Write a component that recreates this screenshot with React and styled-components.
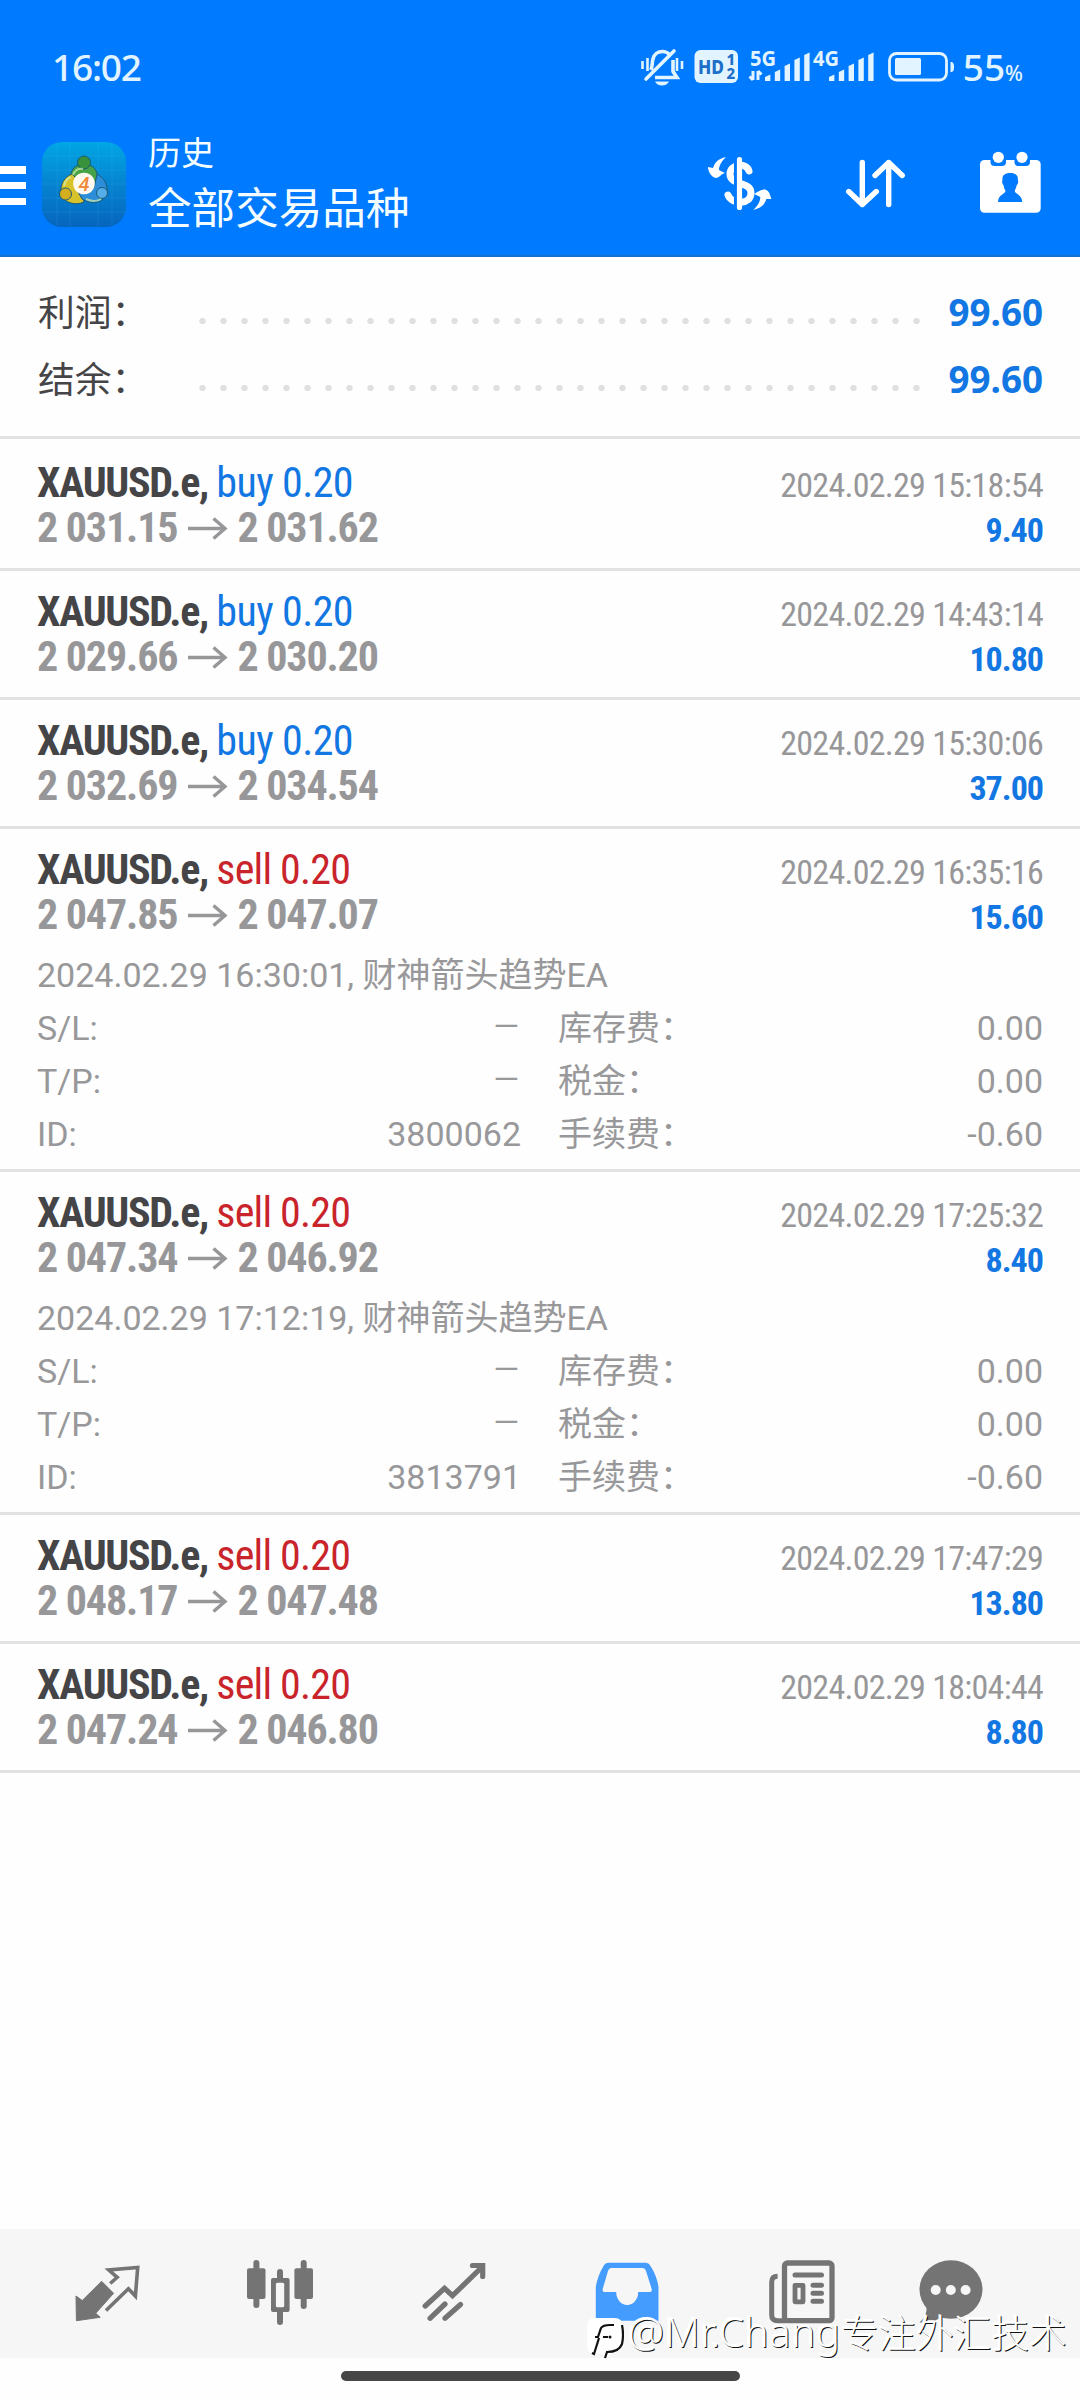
import * as React from "react"
import styled, { createGlobalStyle } from "styled-components"

const GlobalStyle = createGlobalStyle`
* {
  box-sizing: border-box;
}

body {
  margin: 0;
  background: #fefefe;
  font-family: Roboto, "Noto Sans CJK SC", sans-serif;
}

svg {
  display: block;
  flex: none;
}
`

// Styled Components
const Screen = styled.main`
width: 1080px;
height: 2400px;
display: flex;
flex-direction: column;
overflow: hidden;
white-space: nowrap;
`

const Header = styled.header`
height: 257px;
background: #007aff;
border-bottom: 2px solid #1670cf;
color: #f4fdff;
`

const StatusBar = styled.div`
height: 134px;
padding: 0 57px 0 52px;
display: flex;
justify-content: space-between;
color: #e2f4ff;
`

const Clock = styled.span`
font: 500 37px/134px "Noto Sans", sans-serif;
letter-spacing: -1.2px;
`

const AppBar = styled.div`
height: 121px;
display: flex;
`

const MenuIcon = styled.div`
width: 26px;
height: 39px;
margin: 32px 16px 0 0;
display: flex;
flex-direction: column;
justify-content: space-between;

span {
  height: 7.5px;
  background: white;
}
`

const Titles = styled.div`
flex: 1;
padding-left: 21px;

h1,h2 {
  margin: 0;
  font-weight: 400;
  font-family: "Noto Sans CJK SC", sans-serif;
}

h2 {
  font-size: 33px;
  line-height: 34px;
}

h1 {
  font-size: 43.6px;
  line-height: 74px;
}
`

const Actions = styled.div`
display: flex;
gap: 66px;
padding: 14px 34px 0 0;
`

const Summary = styled.section`
height: 182px;
padding-top: 21px;
border-bottom: 3px solid #e2e2e2;
margin-bottom: 3px;
`

const SummaryRow = styled.div`
height: 67px;
padding: 0 37px 0 38px;
display: flex;
align-items: center;
`

const SummaryLabel = styled.span`
width: 154px;
margin-top: -2px;
font: 400 36.8px/67px "Noto Sans CJK SC", sans-serif;
color: #454547;
`

const Dots = styled.span`
width: 735px;
height: 6px;
margin-top: 18px;
background: radial-gradient(circle, #e0e0e0 2.9px, transparent 3.5px) 0 0 / 21px 6px;
`

const SummaryValue = styled.span`
flex: 1;
text-align: right;
font: 700 36.8px/68px "Noto Sans", sans-serif;
color: #1277e2;
`

const Deal = styled.article`
height: ${p => (p.$open ? 343 : 129)}px;
padding: 18px 37px 0;
border-bottom: 3px solid #e2e2e2;
`

const Line = styled.div`
height: 45px;
display: flex;
justify-content: space-between;
align-items: baseline;
line-height: 45px;
font-family: "Roboto Condensed", Roboto, sans-serif;
font-stretch: 75%;
`

const Symbol = styled.span`
font-size: 42px;
font-weight: 700;
letter-spacing: -1.3px;
color: #454547;
`

const Side = styled.span`
font-weight: 400;
letter-spacing: ${p => (p.$side === "buy" ? -0.6 : -0.8)}px;
color: ${p => (p.$side === "buy" ? "#1277e2" : "#c9242b")};
`

const Prices = styled.span`
display: flex;
font-size: 42px;
font-weight: 700;
letter-spacing: -1.1px;
color: #97979a;

svg {
  margin: 12px 9px 0 11px;
}
`

const Time = styled.span`
font-size: 34px;
letter-spacing: -0.73px;
color: #97979a;
`

const Profit = styled.span`
font-size: 34px;
font-weight: 700;
letter-spacing: -1px;
color: #1277e2;
`

const Details = styled.div`
padding-top: 12px;
font-size: 34px;
line-height: 53px;
color: #98989a;
`

const Grid = styled.div`
display: grid;
grid-template-columns: 110px 374px 150px 1fr;
grid-auto-rows: 53px;

span:nth-child(even) {
  text-align: right;
}
span:nth-child(4n + 3) {
  padding-left: 37px;
}
`

const Dash = styled.i`
font-style: normal;
font-weight: 300;
font-size: 44px;
line-height: 0;
vertical-align: -2px;
`

const Spacer = styled.div`
flex: 1;
`

const TabBar = styled.nav`
height: 129px;
padding: 27px 0 0 20px;
background: #f6f6f6;
display: flex;
color: #747474;
`

const Tab = styled.div`
width: ${p => p.$width || 173.5}px;
display: flex;
justify-content: center;
color: ${p => (p.$active ? "#459cff" : "inherit")};
`

const HomeArea = styled.div`
height: 42px;
padding-top: 13px;
`

const HomeBar = styled.div`
width: 399px;
height: 10px;
margin: 0 auto;
border-radius: 5px;
background: #464646;
`

// sits over the tab bar
const Watermark = styled.div`
position: absolute;
left: 586px;
top: 2308px;
display: flex;
gap: 4px;
font: 300 40.5px/52px "Noto Sans", sans-serif;
letter-spacing: 0.5px;
color: white;
text-shadow: 1px 1px 0 #111, -1px -1px 0 white;

svg {
  margin-top: 9px;
}

> span {
  margin-top: -3px;
}

span span {
  font: 300 37.7px/52px "Noto Sans CJK SC", sans-serif;
  letter-spacing: 0;
}
`

const Signal = ({ label, data }) => (
  <svg width={data ? 64 : 62} height="134" viewBox={data ? "0 0 64 134" : "0 0 62 134"} fill="currentColor">
    <text x={data ? 2 : 1} y="65.500" fontFamily="Noto Sans" fontWeight="700" fontSize="21" textLength="26" lengthAdjust="spacingAndGlyphs">{label}</text>
    {data && <path d="M5 71v9M5 80l-3.500-3.500M10 80v-9M10 71l3.500 3.500" stroke="currentColor" strokeWidth="3" fill="none" />}
    {[0, 1, 2, 3, 4].map(i => (
      <path key={i} d={`M${17 + i * 9.8} ${81}v-${[4, 9, 15, 21, 26][i]}l5.4-2.4v${[6.4, 11.4, 17.4, 23.4, 28.4][i]}z`} />
    ))}
  </svg>
)

const StatusIcons = styled.div`
display: flex;
`

const Percent = styled.span`
font: 500 37px/134px "Noto Sans", sans-serif;
margin-left: 8px;

small {
  font-size: 21px;
}
`

const Status = () => (
  <StatusIcons>
    <svg width="53" height="134" viewBox="0 0 53 134" fill="none" stroke="currentColor" strokeWidth="3.6">
      <path d="M14 77.500h22l-4-6V60M10 70c1.500-4 1-8 2-11 1-5 5-7.500 9.500-7.500 3 0 5 1 7 3" />
      <path d="M5 79L33 51" strokeLinecap="round" />
      <path d="M14 81.500h14q-2 4-7 4t-7-4z" fill="currentColor" stroke="none" />
      <path d="M1.500 61v8M6.500 58v13M36 58v13M41 61v8" strokeWidth="2.600" />
    </svg>
    <svg width="54" height="134" viewBox="0 0 54 134">
      <rect x="0.500" y="50" width="43.500" height="33" rx="6" fill="currentColor" />
      <g fill="#1d6fc9" fontFamily="Noto Sans" fontWeight="800">
        <text x="4" y="74" fontSize="20" textLength="26" lengthAdjust="spacingAndGlyphs">HD</text>
        <text x="32.500" y="65" fontSize="15">1</text>
        <text x="32.500" y="79" fontSize="15">2</text>
      </g>
    </svg>
    <Signal label="5G" data />
    <Signal label="4G" />
    <svg width="81" height="134" viewBox="0 0 81 134">
      <rect x="15.500" y="53.500" width="57" height="26.500" rx="7" fill="none" stroke="currentColor" strokeWidth="2.800" />
      <rect x="21" y="58" width="26" height="17" rx="1.500" fill="currentColor" />
      <path d="M76.500 62c3 0 3.500 2 3.500 5s-.5 5-3.500 5z" fill="currentColor" />
    </svg>
    <Percent>55<small>%</small></Percent>
  </StatusIcons>
)

const AppIcon = styled.svg`
margin-top: 8px;
`

const Logo = () => (
  <AppIcon width="85" height="85" viewBox="0 0 85 85">
    <defs>
      <linearGradient id="sky" x2="0" y2="1">
        <stop offset="0" stopColor="#00a6e4" />
        <stop offset=".5" stopColor="#0683d0" />
        <stop offset="1" stopColor="#0565bd" />
      </linearGradient>
    </defs>
    <rect width="84" height="85" rx="20" fill="url(#sky)" />
    <path d="M15 2v81M28 1v83M56 1v83M70 2v81M1 14h83M1 28h83M1 56h83M1 70h83M0 42h84" stroke="#4bb8ee" strokeOpacity=".16" />
    <g stroke="#195b76" strokeWidth="1">
      <path d="M28 42c-1-11 3-20 14-20s15 9 14 20l-7 3H34z" fill="#48a348" />
      <path d="M30 32c-8 3-12 10-11 20 3 9 14 12 23 8l-4-20z" fill="#d8c22c" />
      <path d="M55 32c7 4 11 10 10 19-3 10-15 12-25 6l-4-7 16-4z" fill="#2d8dd8" />
      <path d="M35 35c2-4 11-4 14 0z" fill="#145d86" />
      <circle cx="42" cy="20.500" r="6.500" fill="#38913b" />
      <circle cx="23.500" cy="52" r="6" fill="#d3af1f" />
      <circle cx="60" cy="51" r="5.500" fill="#56aee9" />
    </g>
    <path d="M31 33c2-5 6-7 10-6M22 44c1-5 4-8 7-9M44 57c6 3 12 2 15 0" stroke="#d5efaf" strokeWidth="2" fill="none" opacity=".7" />
    <circle cx="42" cy="41.500" r="10.800" fill="#fffaf1" />
    <text x="42" y="49" textAnchor="middle" fontFamily="Roboto" fontSize="20" fontWeight="500" fontStyle="italic" fill="#ef8b3a">4</text>
  </AppIcon>
)

const DollarIcon = () => (
  <svg width="72" height="76" viewBox="0 -4 72 76" fill="none" stroke="white">
    <path d="M45 19C42 10 26 12 26 22c0 12 21 7 21 19 0 12-19 12-23 2" strokeWidth="7" strokeLinecap="round" />
    <path d="M31.500 5v53" stroke="#007aff" strokeWidth="3" />
    <path d="M35.500 7.500v48" strokeWidth="5.200" strokeLinecap="round" />
    <path d="M22 5c-8 2-11 5-13 11l-5-1c0 4 3 10 8 11 3 0 5-4 9-5l-6-3c0-5 3-9 7-13z" fill="white" stroke="none" />
    <path d="M49.300 58c8-2 11-5 13-11h5c-1-4-2-8-6-9.500-4 0-7 2-11 4.500l6 3c0 5-3 9-7 13z" fill="white" stroke="none" />
  </svg>
)

const SortIcon = () => (
  <svg width="68" height="72" viewBox="0 -8 68 72" fill="none" stroke="white" strokeWidth="5.400" strokeLinecap="round" strokeLinejoin="round">
    <path d="M20.300 6.500v42M6.700 35.500L20.300 48.500 34.300 35.500" />
    <path d="M46.700 48.500v-42M33 19.500L46.700 6.500 60.300 19.500" />
  </svg>
)

const CalendarIcon = () => (
  <svg width="70" height="72" viewBox="0 0 70 72" fill="white">
    <rect x="4" y="12" width="60.700" height="52.700" rx="4.500" />
    <path d="M14.500 9h15.500v5q0 4-4 4h-7.500q-4 0-4-4zM38.500 9h15.500v5q0 4-4 4h-7.500q-4 0-4-4z" fill="#007aff" />
    <circle cx="22.300" cy="9.300" r="5.600" />
    <circle cx="46" cy="9.300" r="5.600" />
    <path d="M34.300 25c6 0 8 3 7.500 7 1 2 0 4-1 5-1 4-2 5-2 6 0 3 7 3 7.500 11H22c.5-8 7.500-8 7.500-11 0-1-1.500-2-2-6-1-1-2-3-1-5-.5-4 1.500-7 7.800-7z" fill="#007aff" />
  </svg>
)

const Arrow = () => (
  <svg width="40" height="24" viewBox="0 0 40 24" fill="none" stroke="currentColor" strokeWidth="3.400">
    <path d="M0 11.500h37M25.500 1.500l11.500 10-11.500 10" />
  </svg>
)

const tabIcons = [
  <>
    <path d="M5 40l6.300 4.500L30.600 25.300l12 12-17.900 20 4.500 4-23.800 3.400z" fill="currentColor" />
    <path d="M35 54.500L57.400 32.700l7 7.300L66.700 11.500 37.800 14l8.400 7.300-7 6.200" strokeWidth="3.600" />
  </>,
  <>
    <path d="M12.400 7v42M36 16v50M59.700 7v43" strokeWidth="6" strokeLinecap="round" />
    <g fill="currentColor" stroke="none">
      <rect x="3" y="12.300" width="18.500" height="30.700" rx="2" />
      <rect x="27" y="22" width="18.600" height="34" rx="2" />
      <rect x="50.400" y="12.300" width="18.600" height="30.700" rx="2" />
    </g>
    <rect x="31.900" y="26.700" width="8.300" height="24.600" rx="1.500" fill="#f6f6f6" stroke="none" />
  </>,
  <g strokeWidth="5.200" strokeLinecap="round">
    <path d="M7.200 50L26.500 32.300l8 7.400L64.400 10.700M12 62.300L27 48M27 62.300L42.500 48.500" />
    <path d="M54.500 9.500h10.200v11" />
  </g>,
  <path d="M4.800 64.700V31Q6.500 20 12.500 10q2-3.300 5-3.300h37q3 0 5 3.300 6.500 10 8 21v33.700zM20.500 12q-2.500 0-3.500 3l-5.300 18q-.5 3 1.500 3h12a11 13 0 0 0 22 0h12q2 0 1.500-3L55 15q-1-3-3.500-3z" fill="currentColor" fillRule="evenodd" stroke="none" />,
  <>
    <rect x="19.500" y="7" width="47.500" height="57.700" rx="3" strokeWidth="5.300" />
    <path d="M12.600 20.300Q6.700 20.300 6.700 26v33q0 5.700 6 5.700h8" strokeWidth="5" />
    <path d="M30 19h26.500M48 29.300h8.500M48 37.300h8.500M48 45.300h8.500" strokeWidth="5" strokeLinecap="round" />
    <rect x="30" y="29.300" width="8" height="16.500" strokeWidth="4.800" strokeLinejoin="round" />
  </>,
  <>
    <ellipse cx="36" cy="33.500" rx="31.500" ry="29.300" fill="currentColor" stroke="none" />
    <path d="M11.500 50q1 10-7 16.500 12 .5 22-5z" fill="currentColor" stroke="none" />
    <g fill="#f6f6f6" stroke="none">
      <circle cx="20.700" cy="34" r="5" />
      <circle cx="35.800" cy="34" r="5" />
      <circle cx="50.600" cy="34" r="5" />
    </g>
  </>,
]

const deals = [
  { side: "buy", from: "2 031.15", to: "2 031.62", time: "15:18:54", profit: "9.40" },
  { side: "buy", from: "2 029.66", to: "2 030.20", time: "14:43:14", profit: "10.80" },
  { side: "buy", from: "2 032.69", to: "2 034.54", time: "15:30:06", profit: "37.00" },
  { side: "sell", from: "2 047.85", to: "2 047.07", time: "16:35:16", profit: "15.60", opened: "16:30:01", id: "3800062" },
  { side: "sell", from: "2 047.34", to: "2 046.92", time: "17:25:32", profit: "8.40", opened: "17:12:19", id: "3813791" },
  { side: "sell", from: "2 048.17", to: "2 047.48", time: "17:47:29", profit: "13.80" },
  { side: "sell", from: "2 047.24", to: "2 046.80", time: "18:04:44", profit: "8.80" },
]

// markup
const App = () => {
  return (
    <Screen>
      <GlobalStyle />
      <Header>
        <StatusBar>
          <Clock>16:02</Clock>
          <Status />
        </StatusBar>
        <AppBar>
          <MenuIcon><span /><span /><span /></MenuIcon>
          <Logo />
          <Titles>
            <h2>历史</h2>
            <h1>全部交易品种</h1>
          </Titles>
          <Actions>
            <DollarIcon />
            <SortIcon />
            <CalendarIcon />
          </Actions>
        </AppBar>
      </Header>
      <Summary>
        {["利润", "结余"].map(label => (
          <SummaryRow key={label}>
            <SummaryLabel>{label}：</SummaryLabel>
            <Dots />
            <SummaryValue>99.60</SummaryValue>
          </SummaryRow>
        ))}
      </Summary>
      {deals.map(d => (
        <Deal key={d.time} $open={!!d.id}>
          <Line>
            <Symbol>XAUUSD.e, <Side $side={d.side}>{d.side} 0.20</Side></Symbol>
            <Time>2024.02.29 {d.time}</Time>
          </Line>
          <Line>
            <Prices>{d.from}<Arrow />{d.to}</Prices>
            <Profit>{d.profit}</Profit>
          </Line>
          {d.id && (
            <Details>
              <div>2024.02.29 {d.opened}, 财神箭头趋势EA</div>
              <Grid>
                <span>S/L:</span><span><Dash>–</Dash></span><span>库存费：</span><span>0.00</span>
                <span>T/P:</span><span><Dash>–</Dash></span><span>税金：</span><span>0.00</span>
                <span>ID:</span><span>{d.id}</span><span>手续费：</span><span>-0.60</span>
              </Grid>
            </Details>
          )}
        </Deal>
      ))}
      <Spacer />
      <TabBar>
        {tabIcons.map((icon, i) => (
          <Tab key={i} $active={i === 3} $width={i === 5 ? 127 : 0}>
            <svg width="72" height="72" viewBox="0 0 72 72" fill="none" stroke="currentColor">{icon}</svg>
          </Tab>
        ))}
      </TabBar>
      <HomeArea>
        <HomeBar />
      </HomeArea>
      <Watermark>
        <svg width="38" height="44" viewBox="0 0 38 44" fill="none">
          <path d="M9 1h19q9 0 9 9v15q0 10-11 12l-7 5-1-5H9q-8 0-8-9V10q0-9 8-9z" fill="white" />
          <path d="M6 36l2 1 5-16M9 20h3l3-9q2-3 9-3h4M17 20h5M36 8q2 10 0 19-3 8-15 8l-2 6" stroke="#111" strokeWidth="2.200" />
          <circle cx="24" cy="20" r="1.500" fill="#111" />
        </svg>
        <span>@Mr.Chang<span>专注外汇技术</span></span>
      </Watermark>
    </Screen>
  )
}

export default App
